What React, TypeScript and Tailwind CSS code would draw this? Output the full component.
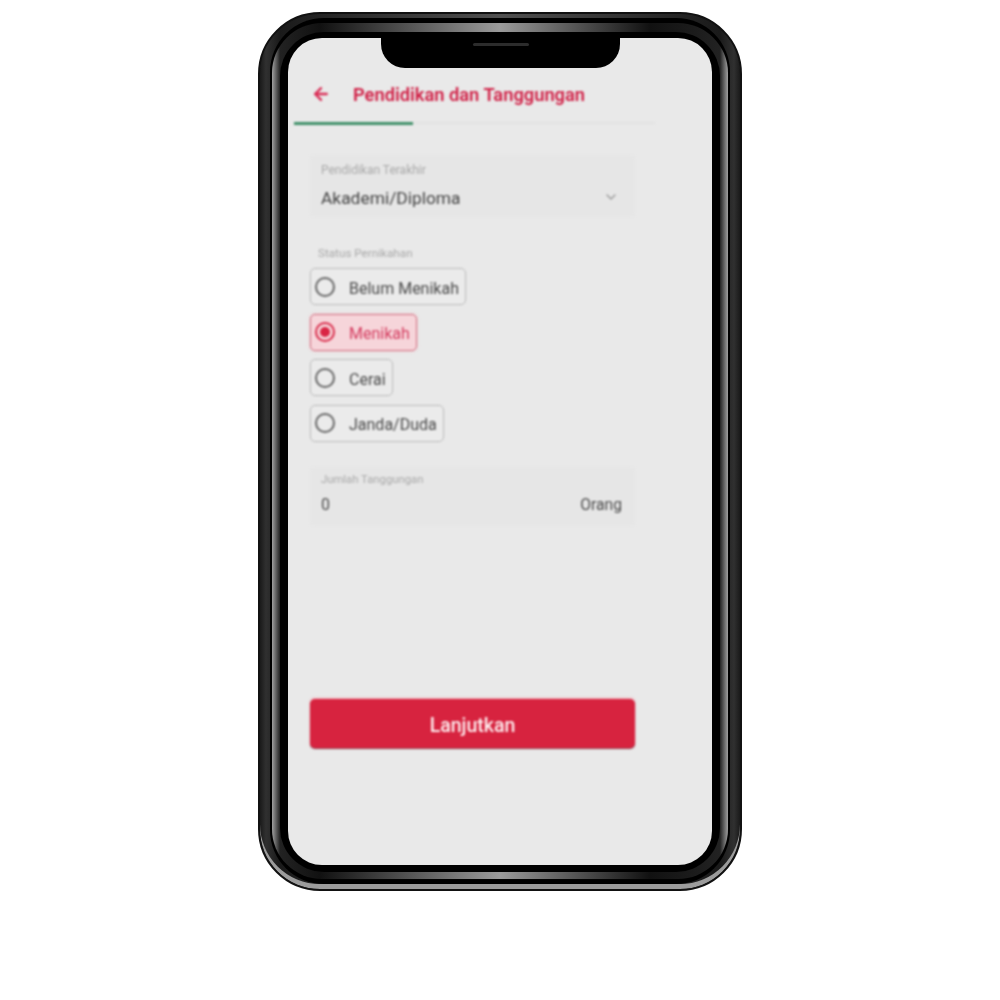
import { ArrowLeft, ChevronDown } from "lucide-react";

const options = [
    { label: "Belum Menikah", width: "w-[156px]", selected: false },
    { label: "Menikah", width: "w-[107px]", selected: true },
    { label: "Cerai", width: "w-[83px]", selected: false },
    { label: "Janda/Duda", width: "w-[134px]", selected: false },
];

const RadioOption = ({ label, width, selected }: { label: string; width: string; selected: boolean }) => (
    <div
        className={`flex h-[37px] items-center rounded-[5px] border pl-[4px] ${width} ${
            selected
                ? "border-[#cf6f80] bg-[#f6d5da] text-[#d43a5e] shadow-[0_0_3px_#f3b9c4]"
                : "border-[#b8b8b8] bg-[#ebebeb] text-[#4a4a4a]"
        }`}
    >
        <span
            className={`flex h-[20px] w-[20px] shrink-0 items-center justify-center rounded-full border-2 ${
                selected ? "border-[#d92c4b]" : "border-[#666666]"
            }`}
        >
            {selected && <span className="h-[10px] w-[10px] rounded-full bg-[#d92544]" />}
        </span>
        <span className="ml-[14px] whitespace-nowrap pt-[4px] text-[16px]">{label}</span>
    </div>
);

export default function App() {
    return (
        <div className="flex min-h-[1000px] justify-center bg-white pt-[12px] font-['Roboto',sans-serif]">
            {/* Phone body */}
            <div className="h-[879px] w-[484px] rounded-[62px] border-2 border-[#111111] bg-[linear-gradient(90deg,#1a1a1a_0,#303030_6px,#1a1a1a_20px,#505050_240px,#1a1a1a_460px,#303030_474px,#1a1a1a_480px)] pb-[5px] pl-[10px] pr-[10px] pt-[4px] shadow-[inset_0_-5px_0_#9c9c9c]">
                <div className="h-full w-full rounded-[54px] bg-black px-[2px] py-[5px]">
                    {/* Grey inner bezel band */}
                    <div className="h-full w-full rounded-[50px] bg-[linear-gradient(90deg,#a0a0a0_0,#222222_8px,#111111_48px,#9a9a9a_228px,#111111_378px,#222222_448px,#a0a0a0_456px)] pb-[7px] pl-[8px] pr-[8px] pt-[9px]">
                        <div className="h-full w-full rounded-[44px] bg-black px-[8px] pb-[7px] pt-[6px]">
                            {/* Screen */}
                            <div className="relative h-full w-full overflow-hidden rounded-[34px] bg-[#e9e9e9]">
                                {/* Notch */}
                                <div className="absolute left-[93px] top-0 flex h-[30px] w-[239px] justify-center rounded-b-[24px] bg-black pt-[5px]">
                                    <div className="h-[3px] w-[56px] rounded-full bg-[#2c2c2c]" />
                                </div>

                                <div className="flex h-full flex-col blur-[0.8px]">
                                    {/* Header */}
                                    <div className="ml-[23px] mt-[44px] flex h-[24px] items-center">
                                        <ArrowLeft className="h-[20px] w-[20px] text-[#d92c55]" strokeWidth={2.8} />
                                        <span className="ml-[22px] whitespace-nowrap pt-[2px] text-[18.3px] font-semibold text-[#d02046]">
                                            Pendidikan dan Tanggungan
                                        </span>
                                    </div>

                                    {/* Progress */}
                                    <div className="ml-[6px] mt-[16px] h-[2px] w-[361px] bg-[#e2e2e2]">
                                        <div className="h-[3px] w-[119px] bg-[#3f8f68]" />
                                    </div>

                                    <div className="flex flex-1 flex-col pl-[22px]">
                                        {/* Pendidikan */}
                                        <div className="mt-[31px] h-[62px] w-[325px] rounded-[4px] bg-[#e6e6e6] px-[11px] pt-[9px]">
                                            <div className="text-[12px] leading-[12px] text-[#a8a8a8]">Pendidikan Terakhir</div>
                                            <div className="mt-[10px] flex items-center justify-between pr-[5px]">
                                                <span className="text-[17.4px] leading-[24px] text-[#444444]">Akademi/Diploma</span>
                                                <ChevronDown className="h-[16px] w-[16px] -translate-y-[1px] text-[#999999]" />
                                            </div>
                                        </div>

                                        {/* Status */}
                                        <div className="ml-[8px] mt-[30px] text-[11.7px] leading-[12px] text-[#a8a8a8]">Status Pernikahan</div>
                                        <div className="mt-[9px] flex flex-col gap-[8.5px]">
                                            {options.map(option => (
                                                <RadioOption key={option.label} {...option} />
                                            ))}
                                        </div>

                                        {/* Tanggungan */}
                                        <div className="mt-[25.5px] h-[59px] w-[325px] rounded-[4px] bg-[#e6e6e6] px-[11px] pt-[7px]">
                                            <div className="text-[11.3px] leading-[12px] text-[#a8a8a8]">Jumlah Tanggungan</div>
                                            <div className="mt-[6.5px] flex items-center justify-between pr-[2px] text-[#4a4a4a]">
                                                <span className="text-[16px] leading-[24px]">0</span>
                                                <span className="text-[15.7px] leading-[24px]">Orang</span>
                                            </div>
                                        </div>

                                        {/* Submit */}
                                        <button className="mt-[172.5px] h-[49px] w-[325px] rounded-[5px] bg-[#d7233f] pt-[5px] text-[19.5px] font-medium text-[#fff0f1] shadow-[0_1px_1px_#8f3a4a,0_-1px_2px_#f3a5b0]">
                                            Lanjutkan
                                        </button>
                                    </div>
                                </div>
                            </div>
                        </div>
                    </div>
                </div>
            </div>
        </div>
    );
}
